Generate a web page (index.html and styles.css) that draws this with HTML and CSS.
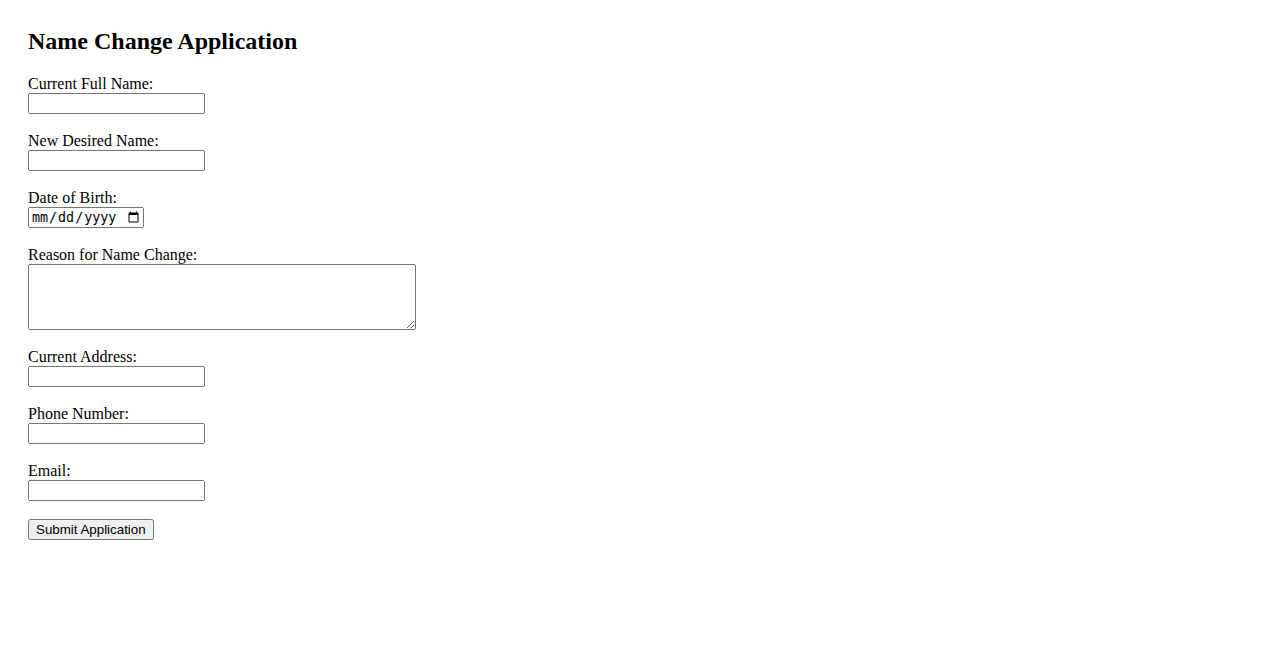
FILE: index.html
```html
<!DOCTYPE html>
<html lang="en">
<head>
    <meta charset="UTF-8">
    <title>Name Change Application</title>
    <link rel="stylesheet" href="styles.css">
</head>
<body>
    <div class="container">
        <h2 class="title">Name Change Application</h2>
        <form>
            <div class="field">
                <label for="currentName">Current Full Name:</label>
                <input type="text" id="currentName">
            </div>
            <div class="field">
                <label for="newName">New Desired Name:</label>
                <input type="text" id="newName">
            </div>
            <div class="field">
                <label for="dob">Date of Birth:</label>
                <input type="date" id="dob">
            </div>
            <div class="field">
                <label for="reason">Reason for Name Change:</label>
                <textarea id="reason" rows="4" cols="50"></textarea>
            </div>
            <div class="field">
                <label for="address">Current Address:</label>
                <input type="text" id="address">
            </div>
            <div class="field">
                <label for="phone">Phone Number:</label>
                <input type="tel" id="phone">
            </div>
            <div class="field">
                <label for="email">Email:</label>
                <input type="email" id="email">
            </div>
            <button type="submit" class="submit-btn">Submit Application</button>
        </form>
    </div>
</body>
</html>
```

FILE: styles.css
```css
body {
    font-family: "Liberation Serif", "Times New Roman", serif;
    margin: 8px;
}

.container {
    padding: 20px;
}

.title {
    margin-top: 0;
    margin-bottom: 20px;
}

.field {
    margin-bottom: 18px;
}

.field label {
    display: block;
}

.field input {
    box-sizing: border-box;
    width: 177px;
    height: 21px;
}

.field input[type="date"] {
    width: 116px;
}

textarea {
    display: block;
    box-sizing: border-box;
    width: 388px;
    height: 66px;
}
```
